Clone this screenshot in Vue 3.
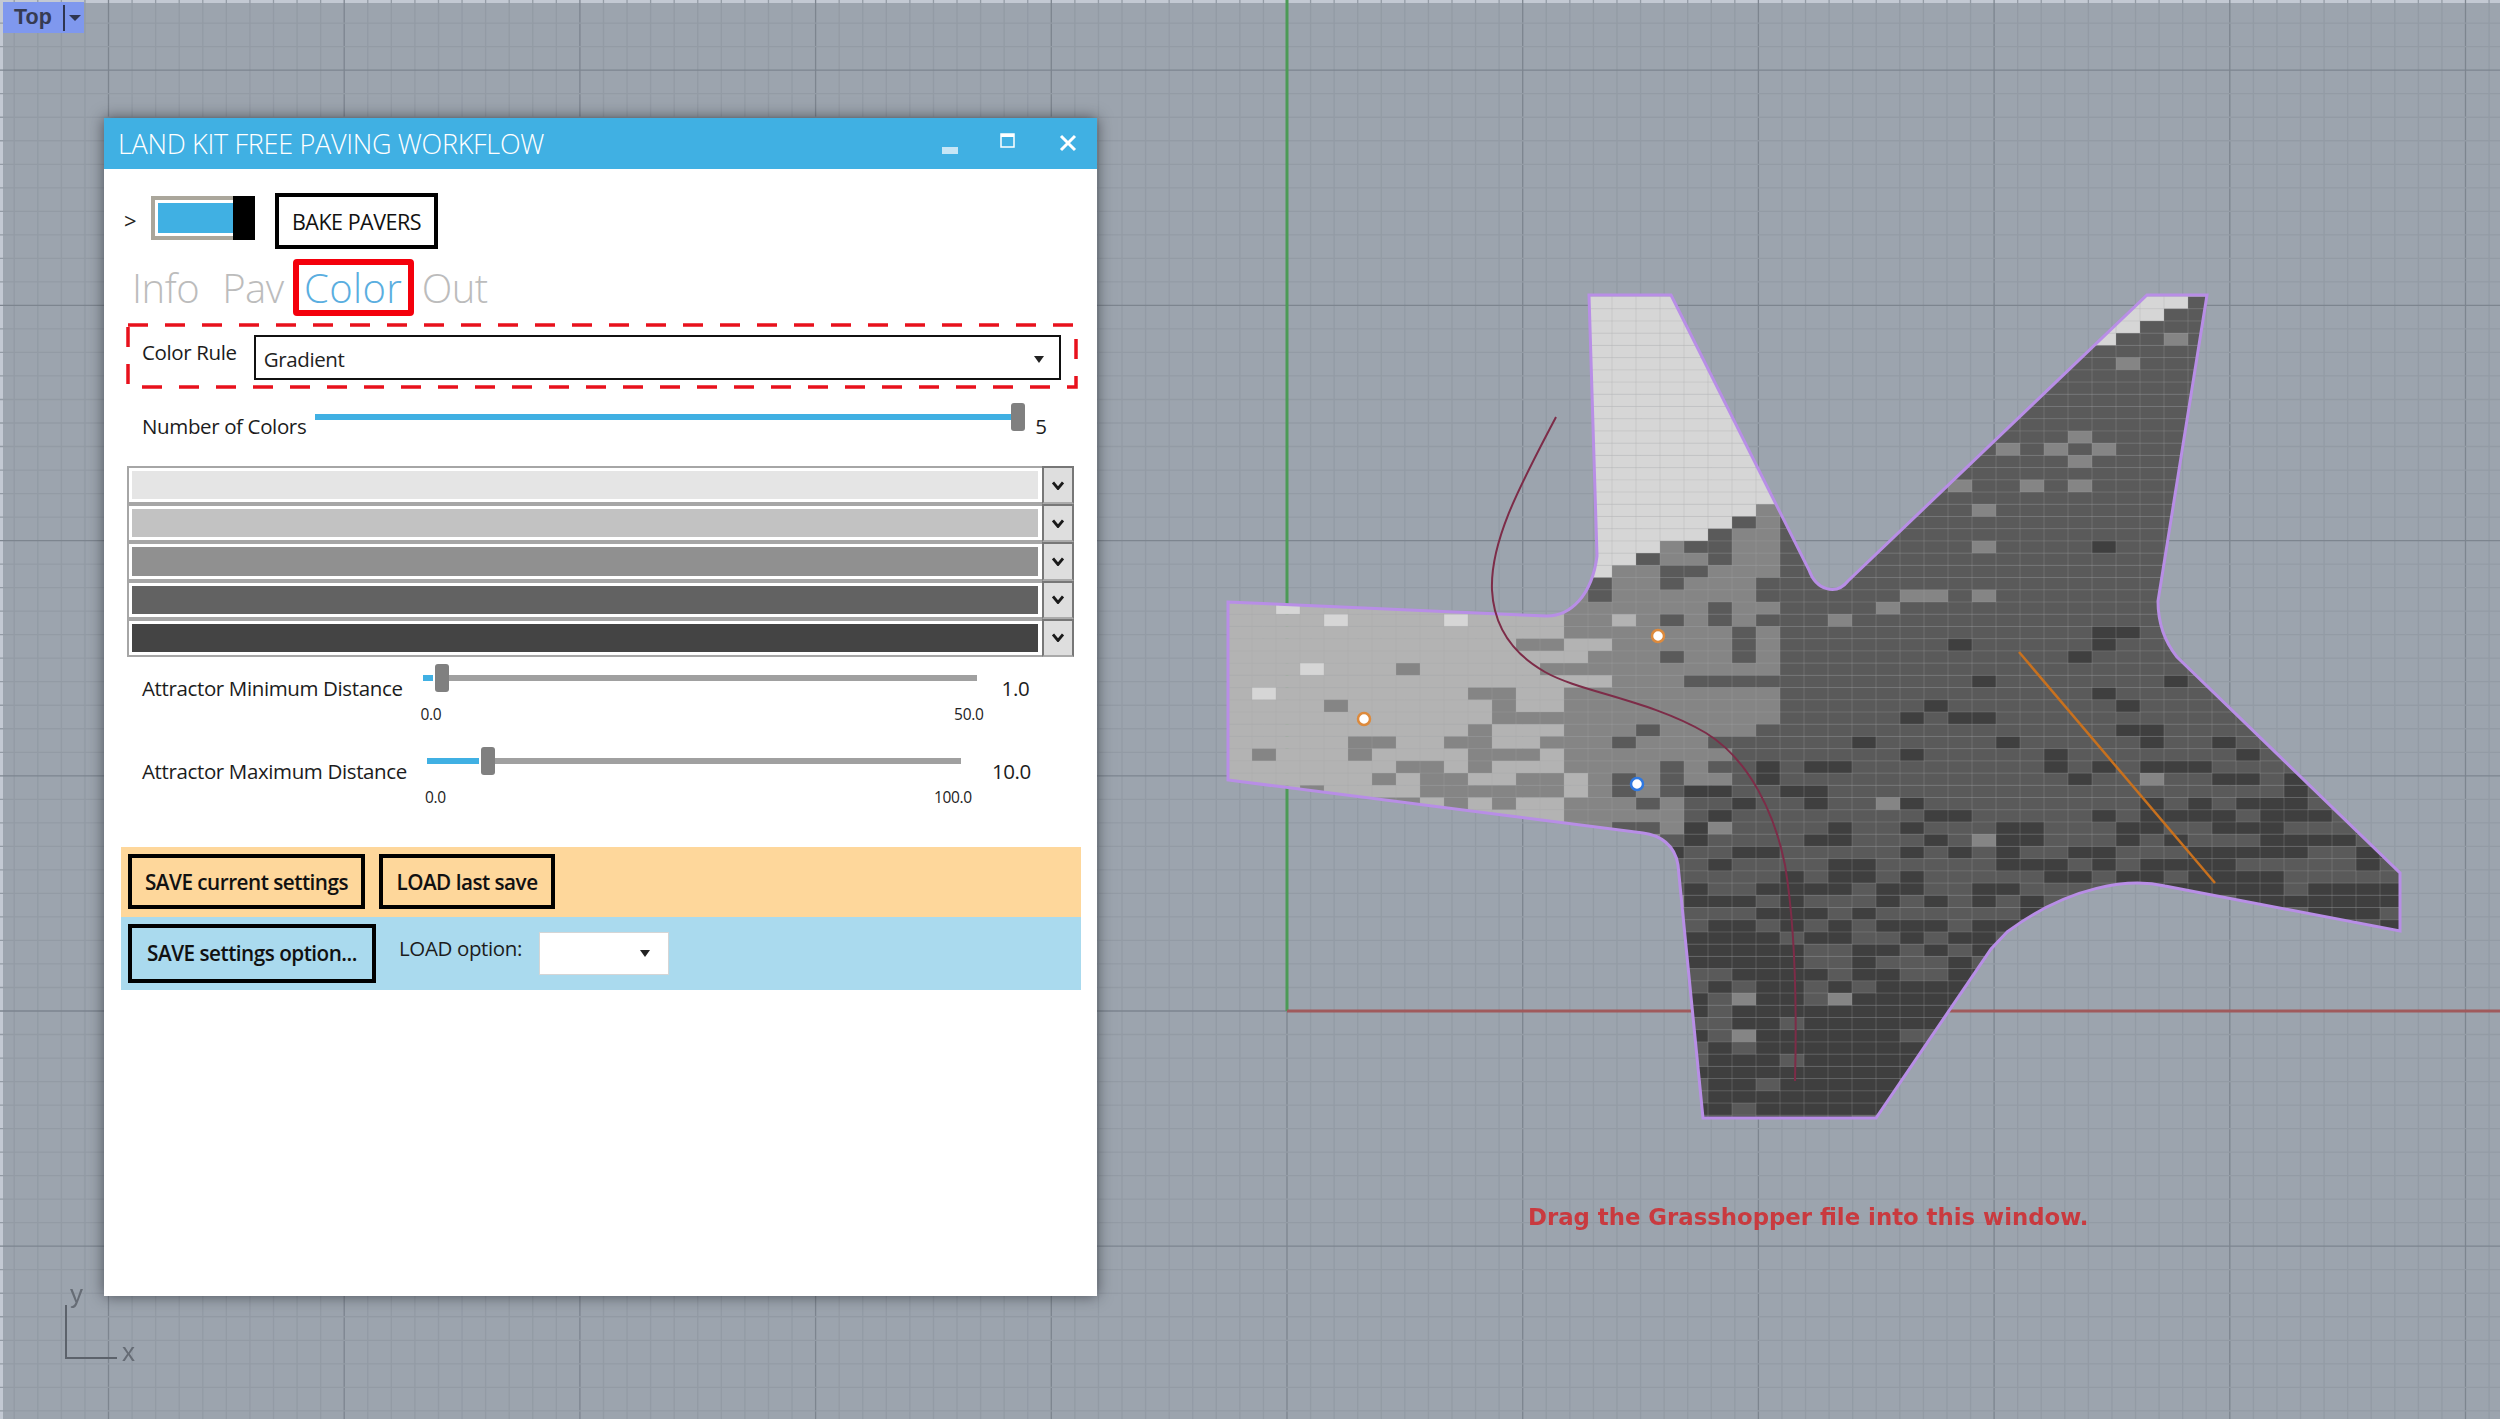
<template>
  <div class="viewport">
    <svg class="scene" width="2500" height="1419" viewBox="0 0 2500 1419">
      <defs>
        <clipPath id="paving">
          <path :d="outline" />
        </clipPath>
      </defs>
      <line v-for="x in gridX" :key="'x' + x.at" :x1="x.at" y1="0" :x2="x.at" y2="1419" :stroke="x.major ? '#7d858f' : '#939ba5'" stroke-width="1.3" />
      <line v-for="y in gridY" :key="'y' + y.at" x1="0" :y1="y.at" x2="2500" :y2="y.at" :stroke="y.major ? '#7d858f' : '#939ba5'" stroke-width="1.3" />
      <line x1="1287" y1="0" x2="1287" y2="1011" stroke="#4c9a56" stroke-width="3" />
      <line x1="1287" y1="1011" x2="2500" y2="1011" stroke="#a05a5c" stroke-width="3" />

      <g clip-path="url(#paving)">
        <rect v-for="c in cells" :key="c.id" :x="c.x" :y="c.y" width="24.2" height="12.4" :fill="c.fill" />
        <line v-for="x in cellLinesX" :key="'cx' + x" :x1="x" y1="290" :x2="x" y2="1120" stroke="#aaa" stroke-opacity="0.28" />
        <line v-for="y in cellLinesY" :key="'cy' + y" x1="1220" :y1="y" x2="2410" :y2="y" stroke="#aaa" stroke-opacity="0.28" />
      </g>
      <path :d="outline" fill="none" stroke="#b88ee6" stroke-width="3" />

      <path
        d="M1556 417C1522 482 1490 540 1492 590C1494 630 1515 655 1545 672C1580 692 1650 700 1706 733C1750 760 1775 815 1785 865C1795 925 1797 1000 1795 1081"
        fill="none"
        stroke="#7d2c48"
        stroke-width="2"
      />
      <line x1="2019" y1="652" x2="2215" y2="883" stroke="#c8711e" stroke-width="2.5" />
      <g v-for="p in points" :key="p.x">
        <circle :cx="p.x" :cy="p.y" r="6" fill="#fff" :stroke="p.color" stroke-width="2.5" />
      </g>

      <path d="M66 1305V1358H117" fill="none" stroke="#5c626b" stroke-width="2" />
      <text x="70" y="1303" class="axis-label">y</text>
      <text x="122" y="1361" class="axis-label">x</text>
      <text x="1528" y="1225" class="drag-note">Drag the Grasshopper file into this window.</text>
    </svg>

    <div class="view-tab">
      <span class="view-name">Top</span>
      <span class="view-sep"></span>
      <span class="view-arrow"></span>
    </div>

    <div class="window">
      <div class="titlebar">
        <span class="title">LAND KIT FREE PAVING WORKFLOW</span>
        <div class="win-btns">
          <svg width="16" height="7" viewBox="0 0 16 7" class="win-min"><rect width="16" height="7" fill="#c6e6f6" /></svg>
          <svg width="15" height="15" viewBox="0 0 15 15" class="win-max"><path d="M1 1H14V14H1Z M1 3H14" fill="none" stroke="#fff" stroke-width="1.5" /><rect x="1" y="1" width="13" height="3" fill="#fff" /></svg>
          <svg width="18" height="18" viewBox="0 0 18 18" class="win-close"><path d="M2 2L16 16M16 2L2 16" stroke="#fff" stroke-width="3" /></svg>
        </div>
      </div>

      <div class="run-row">
        <span class="chev">&gt;</span>
        <div class="toggle">
          <span class="toggle-fill"></span>
          <span class="toggle-thumb"></span>
        </div>
        <button class="btn bake" type="button">BAKE PAVERS</button>
      </div>

      <div class="tabs">
        <span v-for="t in tabs" :key="t.name" class="tab" :class="[t.cls, { active: t.active }]">{{ t.name }}</span>
      </div>

      <div class="rule-row">
        <svg class="dash-box" width="952" height="66" viewBox="0 0 952 66">
          <rect x="2" y="2" width="948" height="62" fill="none" stroke="#e8111c" stroke-width="3.5" stroke-dasharray="20 17" />
        </svg>
        <span class="label rule-label">Color Rule</span>
        <div class="combo">
          <span>Gradient</span>
          <span class="tri"></span>
        </div>
      </div>

      <div class="count-row">
        <span class="label">Number of Colors</span>
        <div class="count-slider">
          <span class="track-blue"></span>
          <span class="thumb"></span>
        </div>
        <span class="label count-val">5</span>
      </div>

      <div class="swatches">
        <div v-for="s in swatches" :key="s" class="swatch">
          <div class="swatch-well"><div class="swatch-fill" :style="{ background: s }"></div></div>
          <div class="swatch-btn">
            <svg width="12" height="9" viewBox="0 0 12 9"><path d="M1 1.5L6 7.5L11 1.5" fill="none" stroke="#1a1a1a" stroke-width="2.8" /></svg>
          </div>
        </div>
      </div>

      <div v-for="a in attractors" :key="a.label" class="attr" :class="a.cls">
        <span class="label attr-label">{{ a.label }}</span>
        <div class="attr-slider">
          <div class="attr-track">
            <span class="attr-blue"></span>
            <span class="thumb"></span>
            <span class="attr-grey"></span>
          </div>
          <div class="attr-scale">
            <span>0.0</span>
            <span>{{ a.max }}</span>
          </div>
        </div>
        <span class="label attr-val">{{ a.value }}</span>
      </div>

      <div class="save-band">
        <button class="btn save-btn" type="button">SAVE current settings</button>
        <button class="btn load-btn" type="button">LOAD last save</button>
      </div>
      <div class="option-band">
        <button class="btn option-btn" type="button">SAVE settings option...</button>
        <span class="label option-label">LOAD option:</span>
        <div class="option-combo"><span class="tri"></span></div>
      </div>
    </div>
  </div>
</template>

<script setup>
const tabs = [
  { name: 'Info', cls: 'tab-info' },
  { name: 'Pav', cls: 'tab-pav' },
  { name: 'Color', cls: 'tab-color', active: true },
  { name: 'Out', cls: 'tab-out' }
]
const swatches = ['#e5e5e5', '#c2c2c2', '#909090', '#626262', '#444444']
const attractors = [
  { label: 'Attractor Minimum Distance', value: '1.0', max: '50.0', cls: 'attr-min' },
  { label: 'Attractor Maximum Distance', value: '10.0', max: '100.0', cls: 'attr-max' }
]
const points = [
  { x: 1658, y: 636, color: '#dd8a3c' },
  { x: 1364, y: 719, color: '#dd8a3c' },
  { x: 1637, y: 784, color: '#2f78e0' }
]

const outline =
  'M1228 602L1547 616C1570 616 1592 596 1597 556L1589 295L1671 295L1809 570C1816 590 1836 596 1848 581L2147 295L2207 295L2158 601C2158 625 2165 642 2177 657L2400 873L2400 931L2165 886C2130 878 2070 885 2007 932L1991 949L1876 1118L1703 1118L1678 865C1675 845 1660 835 1643 833L1228 780Z'

const gridX = []
for (let i = -54; i < 52; i++) gridX.push({ at: 1287 + i * 23.57, major: i % 10 === 0 })
const gridY = []
for (let i = -42; i < 18; i++) gridY.push({ at: 1011 + i * 23.52, major: i % 10 === 0 })

const CW = 24
const CH = 12.22
const X0 = 1228
const Y0 = 602
const colors = ['#d6d6d6', '#b3b3b3', '#858585', '#5a5a5a', '#3f3f3f']

// cells read off the reference, [level, col, row]
const picked = [
  [2, 7, 5], [2, 4, 8], [2, 1, 12], [2, 5, 11], [2, 6, 11], [2, 5, 12], [2, 7, 13], [2, 8, 13],
  [2, 6, 14], [2, 8, 14], [2, 9, 14], [2, 8, 15], [2, 9, 15], [2, 9, 11], [2, 10, 11], [2, 10, 10],
  [2, 10, 12], [2, 10, 13], [2, 11, 12], [2, 12, 12], [2, 10, 7], [2, 11, 7], [2, 11, 8], [2, 11, 9],
  [2, 12, 9], [2, 13, 9], [2, 13, 11], [2, 12, 14], [2, 13, 14], [2, 12, 15], [2, 13, 15], [2, 10, 15],
  [2, 11, 15], [2, 11, 16], [2, 9, 16], [2, 3, 15], [2, 12, 3], [2, 13, 3], [2, 13, 5], [2, 6, 16], [2, 7, 16],
  [0, 4, 1], [0, 9, 1], [0, 3, 5], [0, 1, 7], [0, 2, 0],
  [1, 14, 3], [1, 15, 3], [1, 14, 4], [1, 15, 6], [1, 14, 6], [1, 14, 14], [1, 14, 15], [1, 16, 1],
  [3, 18, 1], [3, 18, 4], [3, 17, 10], [3, 16, 11], [3, 16, 14], [3, 16, 15], [3, 17, 16], [3, 18, 13],
  [3, 18, 14], [3, 18, 15], [3, 16, 18], [3, 17, 18],
  [2, 30, -10], [2, 31, -8], [2, 32, -13], [2, 33, -10], [2, 34, -13], [2, 35, -14], [2, 35, -10], [2, 35, -12],
  [2, 36, -13], [2, 31, -5], [2, 28, -1], [2, 29, -1], [2, 31, -1], [2, 27, 0], [2, 25, 1], [2, 37, -20], [2, 39, -22],
  [4, 36, -5], [4, 37, 2], [4, 36, 2], [4, 36, 3], [4, 30, 3], [4, 35, 4], [4, 31, 6], [4, 36, 7], [4, 39, 6],
  [4, 37, 8], [4, 29, 8], [4, 28, 9], [4, 30, 9], [4, 31, 9], [4, 26, 11],
  [2, 21, 32], [2, 25, 32], [2, 21, 35]
]
const pickedMap = new Map(picked.map(([l, c, r]) => [c + ':' + r, l]))

function noise(c, r) {
  let h = (c * 374761393 + r * 668265263) | 0
  h = Math.imul(h ^ (h >>> 13), 1274126177)
  h ^= h >>> 16
  return (h >>> 0) / 4294967296
}

function levelAt(c, r) {
  const hit = pickedMap.get(c + ':' + r)
  if (hit !== undefined) return hit
  const x = X0 + (c + 0.5) * CW
  const y = Y0 + (r + 0.5) * CH
  const n = noise(c, r)
  if (c < 14 && r >= 0) return 1
  if (c <= 18 && r >= 0 && r <= 18) return 2
  // upper lobe
  if (x < 1800 && y < 576 - (x - 1599) * 0.41) return 0
  // edge of the mid grey band moves left going down
  const edge = y < 720 ? 1782 : y < 770 ? 1782 - (y - 720) * 1.44 : y < 830 ? 1710 - (y - 770) * 0.66 : 1670
  if (x < edge) {
    if (n < 0.2) return 3
    return 2
  }
  // tip at top right
  if (y < 345 && x < 2147 - (y - 295) * 1.05 + 22 + (345 - y) * 0.5) return 0
  if (y < 720) return 3
  let p = 0.12
  if (y >= 1000) p = 0.86
  else if (y >= 850) p = 0.3 + ((y - 850) / 150) * 0.4
  else if (y >= 760) p = 0.14 + ((y - 760) / 90) * 0.16
  if (x > 2150) p += 0.2
  if (n < p) return 4
  if (n > 0.97 && y < 950) return 2
  return 3
}

const cells = []
for (let c = 0; c < 49; c++) {
  for (let r = -26; r < 43; r++) {
    cells.push({ id: c + ':' + r, x: X0 + c * CW, y: Y0 + r * CH, fill: colors[levelAt(c, r)] })
  }
}
const cellLinesX = []
for (let c = 0; c < 49; c++) cellLinesX.push(X0 + c * CW)
const cellLinesY = []
for (let r = -26; r < 43; r++) cellLinesY.push(Y0 + r * CH)
</script>

<style>
html,
body {
  margin: 0;
  background: #9ca4ae;
}
</style>

<style scoped>
.viewport {
  position: relative;
  width: 2500px;
  height: 1419px;
  overflow: hidden;
  background: #9ca4ae;
  box-shadow: inset 3px 3px 0 #c3c9d3;
  font-family: "Open Sans", "Liberation Sans", sans-serif;
}

.scene {
  position: absolute;
  left: 0;
  top: 0;
  filter: blur(0.5px);
}

.axis-label {
  font: 26px "Liberation Sans", sans-serif;
  fill: #666c75;
}

.drag-note {
  font: bold 22.8px "DejaVu Sans", sans-serif;
  fill: #c93a3f;
}

.view-tab {
  position: absolute;
  left: 3px;
  top: 2px;
  width: 81px;
  height: 31px;
  display: flex;
  align-items: center;
  background: #7f98ee;
  color: #363b52;
}

.view-name {
  margin-left: 11px;
  width: 49px;
  font: bold 21.5px "Liberation Sans", sans-serif;
}

.view-sep {
  width: 2px;
  height: 26px;
  background: #2f3550;
}

.view-arrow {
  margin-left: 4px;
  border-left: 6px solid transparent;
  border-right: 6px solid transparent;
  border-top: 6px solid #2f3550;
}

.window {
  position: absolute;
  left: 104px;
  top: 118px;
  width: 993px;
  height: 1178px;
  background: #fff;
  box-shadow: 0 0 14px rgba(30, 34, 40, 0.65);
  box-sizing: border-box;
}

.titlebar {
  height: 51px;
  display: flex;
  align-items: center;
  justify-content: space-between;
  padding: 0 19px 0 14px;
  background: #40b0e3;
  color: #fff;
}

.title {
  font-size: 27px;
  font-weight: 300;
  letter-spacing: -0.3px;
}

.win-btns {
  display: flex;
  align-items: center;
}

.win-min {
  margin-top: 14px;
}

.win-max {
  margin-left: 42px;
  margin-top: -6px;
}

.win-close {
  margin-left: 44px;
  margin-top: -2px;
  margin-right: 1px;
}

.run-row {
  display: flex;
  align-items: flex-start;
  margin-top: 24px;
  padding-left: 20px;
}

.chev {
  width: 27px;
  margin-top: 12px;
  font-size: 22px;
  line-height: 30px;
  color: #222;
}

.toggle {
  position: relative;
  width: 104px;
  height: 44px;
  margin-top: 3px;
  box-sizing: border-box;
  border: 4px solid #aaa69b;
  background: #fff;
}

.toggle-fill {
  position: absolute;
  left: 3px;
  top: 3px;
  width: 75px;
  height: 30px;
  background: #40b0e3;
}

.toggle-thumb {
  position: absolute;
  right: -4px;
  top: -4px;
  width: 22px;
  height: 44px;
  background: #000;
}

.btn {
  box-sizing: border-box;
  padding: 0;
  background: transparent;
  border: 4px solid #000;
  color: #111;
  font-family: "Open Sans", "Liberation Sans", sans-serif;
  font-size: 20.7px;
  font-weight: 600;
  letter-spacing: -0.5px;
}

.bake {
  width: 163px;
  height: 56px;
  margin-left: 20px;
  font-size: 21.5px;
  font-weight: 400;
  background: #fff;
}

.tabs {
  display: flex;
  align-items: center;
  height: 57px;
  margin-top: 10px;
  padding-left: 28px;
  font-size: 40px;
  font-weight: 300;
  color: #bcbcbc;
  letter-spacing: -0.5px;
}

.tab {
  line-height: 45px;
}

.tab-pav {
  margin-left: 23px;
}

.tab-color {
  box-sizing: border-box;
  width: 121px;
  height: 57px;
  margin-left: 9px;
  text-align: center;
  color: #5aaee0;
  border: 6px solid #f4000c;
  border-radius: 4px;
  letter-spacing: 0.4px;
}

.tab-out {
  margin-left: 8px;
}

.label {
  font-size: 20.5px;
  letter-spacing: -0.37px;
  color: #1c1c1c;
  white-space: nowrap;
}

.rule-row {
  position: relative;
  display: flex;
  align-items: flex-start;
  height: 64px;
  margin: 7px 0 0 24px;
}

.dash-box {
  position: absolute;
  left: -2px;
  top: 0;
}

.rule-label {
  margin: 15px 0 0 14px;
  line-height: 28px;
}

.combo {
  box-sizing: border-box;
  display: flex;
  align-items: center;
  justify-content: space-between;
  width: 807px;
  height: 45px;
  margin: 12px 0 0 17px;
  padding: 3px 15px 0 8px;
  border: 2px solid #111;
  background: #fff;
  font-size: 20.5px;
  letter-spacing: -0.37px;
  color: #222;
}

.tri {
  width: 0;
  height: 0;
  border-left: 5px solid transparent;
  border-right: 5px solid transparent;
  border-top: 7px solid #222;
}

.count-row {
  display: flex;
  align-items: flex-start;
  height: 40px;
  margin-top: 16px;
  padding-left: 38px;
}

.count-row .label {
  margin-top: 9px;
  line-height: 28px;
}

.count-slider {
  display: flex;
  align-items: center;
  height: 27px;
  margin: 0 0 0 9px;
  padding-left: 0;
}

.track-blue {
  width: 696px;
  height: 6px;
  background: #40b0e3;
}

.thumb {
  flex: none;
  width: 14px;
  height: 28px;
  border-radius: 3px;
  background: #808080;
}

.count-val {
  margin-left: 10px;
}

.swatches {
  margin: 23px 0 0 23px;
  width: 947px;
}

.swatch {
  display: flex;
  height: 38.2px;
  box-sizing: border-box;
}

.swatch-well {
  flex: 1;
  box-sizing: border-box;
  border: 2px solid #a6a6a6;
  border-right: 0;
  padding: 3px 4px 3px 3px;
  background: #fff;
}

.swatch-fill {
  height: 100%;
}

.swatch-btn {
  box-sizing: border-box;
  width: 32px;
  display: flex;
  align-items: center;
  justify-content: center;
  background: #dedede;
  border: 2px solid #777;
  border-bottom-color: #aaa;
}

.attr {
  display: flex;
  align-items: flex-start;
  padding-left: 38px;
}

.attr-min {
  margin-top: 7px;
  height: 83px;
}

.attr-max {
  height: 100px;
}

.attr-label {
  margin-top: 10px;
  line-height: 28px;
}

.attr-slider {
  display: flex;
  flex-direction: column;
}

.attr-track {
  display: flex;
  align-items: center;
  height: 28px;
}

.attr-blue {
  height: 6px;
  background: #40b0e3;
}

.attr-grey {
  height: 6px;
  background: #a0a0a0;
}

.attr-min .attr-slider {
  margin-left: 20px;
  width: 554px;
}

.attr-min .attr-blue {
  width: 10px;
  margin-right: 2px;
}

.attr-min .attr-grey {
  width: 528px;
}

.attr-max .attr-slider {
  margin-left: 20px;
  width: 535px;
}

.attr-max .attr-blue {
  width: 52px;
  margin-right: 2px;
}

.attr-max .attr-grey {
  width: 466px;
}

.attr-scale {
  display: flex;
  justify-content: space-between;
  margin-top: 10px;
  font-size: 15.5px;
  letter-spacing: -0.3px;
  line-height: 24px;
  color: #222;
}

.attr-min .attr-scale {
  margin-left: -2px;
  margin-right: -7px;
}

.attr-max .attr-scale {
  margin-left: -2px;
  margin-right: -10px;
}

.attr-val {
  margin-top: 10px;
  line-height: 28px;
}

.attr-min .attr-val {
  margin-left: 25px;
}

.attr-max .attr-val {
  margin-left: 30px;
}

.save-band {
  display: flex;
  align-items: center;
  gap: 14px;
  height: 70px;
  margin: 0 16px 0 17px;
  padding-left: 7px;
  background: #fed79b;
}

.save-btn {
  width: 237px;
  height: 55px;
}

.load-btn {
  width: 176px;
  height: 55px;
}

.option-band {
  display: flex;
  align-items: center;
  height: 73px;
  margin: 0 16px 0 17px;
  padding-left: 7px;
  background: #aadaee;
}

.option-btn {
  width: 248px;
  height: 59px;
}

.option-label {
  margin: -10px 0 0 23px;
  width: 140px;
}

.option-combo {
  box-sizing: border-box;
  display: flex;
  align-items: center;
  justify-content: flex-end;
  width: 130px;
  height: 43px;
  padding-right: 18px;
  background: #fff;
  border: 1px solid #d5d5d5;
}
</style>
